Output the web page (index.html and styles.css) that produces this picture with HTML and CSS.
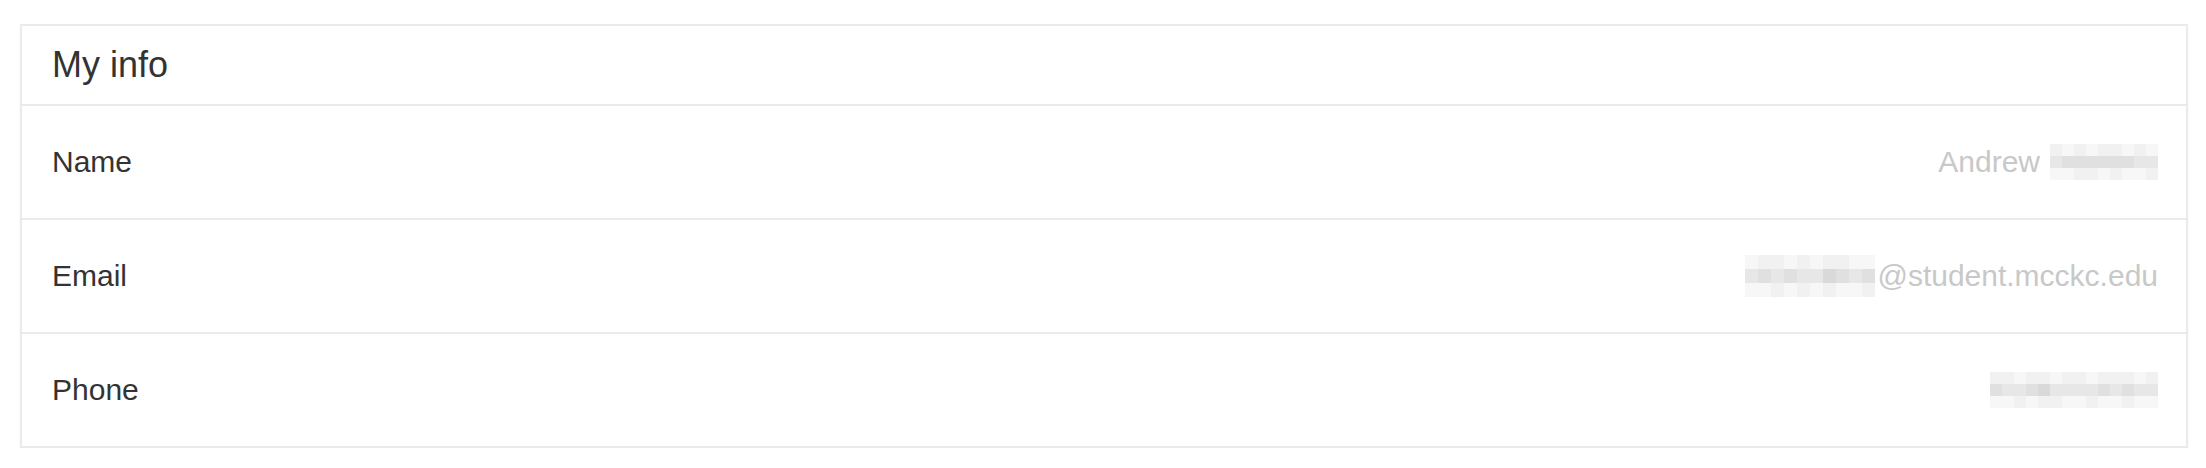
FILE: index.html
```html
<!DOCTYPE html>
<html>

<head>
    <meta charset="utf-8">
    <title>My info</title>
    <link rel="stylesheet" href="styles.css">
</head>

<body>
    <div class="page">
        <div class="panel">
            <div class="panel-heading">My info</div>

            <div class="panel-row">
                <span class="label">Name</span>
                <span class="value">
                    Andrew
                    <span class="blur blur-name">
                        <i class="b"></i><i class="a"></i><i class="b"></i><i class="a"></i><i class="b"></i><i class="b"></i><i class="a"></i><i class="b"></i><i class="a"></i>
                        <i class="c"></i><i class="d"></i><i class="d"></i><i class="d"></i><i class="d"></i><i class="d"></i><i class="d"></i><i class="c"></i><i class="c"></i>
                        <i class="a"></i><i class="a"></i><i class="b"></i><i class="b"></i><i class="a"></i><i class="b"></i><i class="a"></i><i class="a"></i><i class="b"></i>
                    </span>
                </span>
            </div>

            <div class="panel-row">
                <span class="label">Email</span>
                <span class="value tight">
                    <span class="blur blur-email">
                        <i class="a"></i><i class="b"></i><i class="b"></i><i class="a"></i><i class="b"></i><i class="a"></i><i class="b"></i><i class="b"></i><i class="a"></i><i class="a"></i>
                        <i class="c"></i><i class="d"></i><i class="c"></i><i class="d"></i><i class="c"></i><i class="c"></i><i class="e"></i><i class="d"></i><i class="c"></i><i class="d"></i>
                        <i class="a"></i><i class="a"></i><i class="b"></i><i class="a"></i><i class="b"></i><i class="a"></i><i class="b"></i><i class="a"></i><i class="a"></i><i class="b"></i>
                    </span>@student.mcckc.edu
                </span>
            </div>

            <div class="panel-row">
                <span class="label">Phone</span>
                <span class="value">
                    <span class="blur blur-phone">
                        <i class="b"></i><i class="b"></i><i class="a"></i><i class="b"></i><i class="b"></i><i class="a"></i><i class="b"></i><i class="b"></i><i class="a"></i><i class="b"></i><i class="b"></i><i class="b"></i><i class="a"></i><i class="b"></i>
                        <i class="d"></i><i class="c"></i><i class="c"></i><i class="d"></i><i class="e"></i><i class="c"></i><i class="c"></i><i class="c"></i><i class="c"></i><i class="d"></i><i class="c"></i><i class="d"></i><i class="c"></i><i class="c"></i>
                        <i class="a"></i><i class="a"></i><i class="b"></i><i class="a"></i><i class="b"></i><i class="b"></i><i class="a"></i><i class="a"></i><i class="b"></i><i class="a"></i><i class="a"></i><i class="b"></i><i class="a"></i><i class="a"></i>
                    </span>
                </span>
            </div>
        </div>
    </div>
</body>

</html>
```

FILE: styles.css
```css
body {
    margin: 0;
    background-color: #ffffff;
    font-family: 'Liberation Sans', Arial, sans-serif;
    color: #333333;
    -webkit-font-smoothing: antialiased;
}

.page {
    padding: 24px 18px 0 20px;
}

.panel {
    border: 2px solid #ebebeb;
    box-shadow: 0 2px 2px rgba(0, 0, 0, 0.05);
    background-color: #ffffff;
}

.panel-heading {
    height: 78px;
    display: flex;
    align-items: center;
    padding: 0 30px;
    font-size: 36px;
    border-bottom: 2px solid #ebebeb;
}

.panel-row {
    height: 112px;
    display: flex;
    align-items: center;
    justify-content: space-between;
    padding: 0 28px 0 30px;
    border-bottom: 2px solid #ebebeb;
    font-size: 30px;
}

.panel-row:last-child {
    border-bottom: none;
}

.value {
    display: flex;
    align-items: center;
    gap: 10px;
    color: #c8c8c8;
}

.value.tight {
    gap: 2px;
}

/* pixelated blur over private data */
.blur {
    display: grid;
}

.blur i {
    display: block;
}

.blur-name {
    grid-template-columns: repeat(9, 12px);
    grid-auto-rows: 12px;
}

.blur-email {
    grid-template-columns: repeat(10, 13px);
    grid-auto-rows: 14px;
}

.blur-phone {
    grid-template-columns: repeat(14, 12px);
    grid-auto-rows: 12px;
}

.blur .a {
    background-color: #f7f7f7;
}

.blur .b {
    background-color: #f1f1f1;
}

.blur .c {
    background-color: #e7e7e7;
}

.blur .d {
    background-color: #e0e0e0;
}

.blur .e {
    background-color: #d9d9d9;
}
```
